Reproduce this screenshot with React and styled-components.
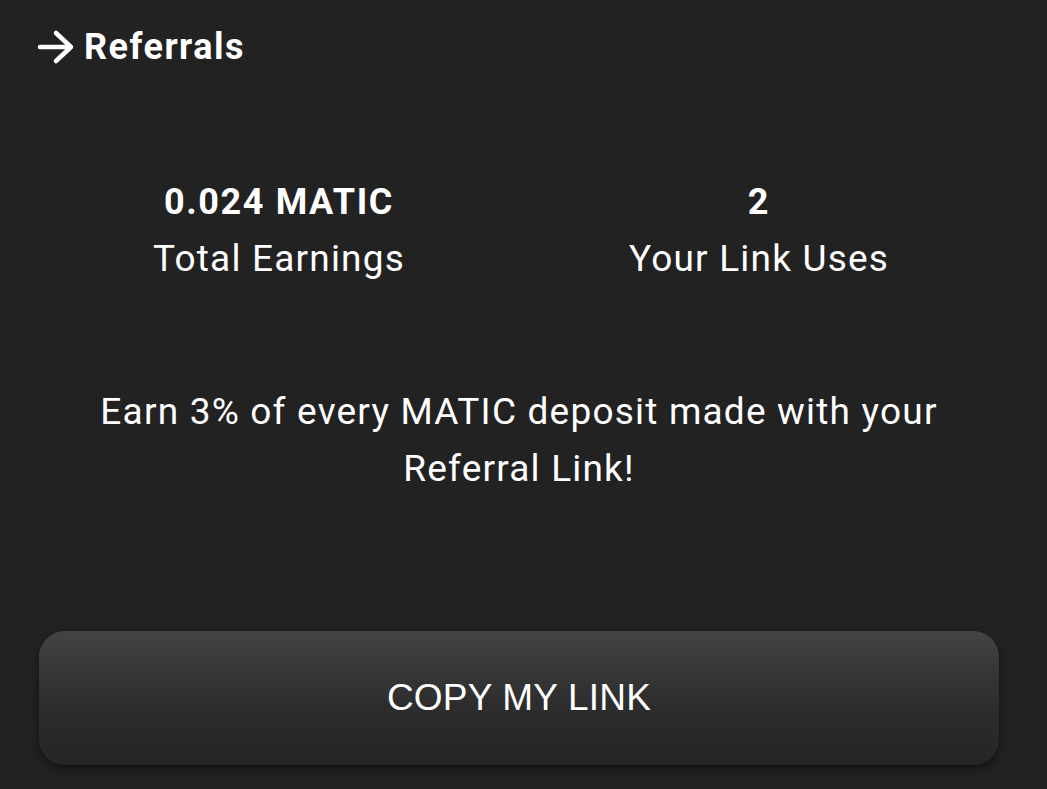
import React from "react";
import styled, { createGlobalStyle } from "styled-components";

const GlobalStyle = createGlobalStyle`
  html, body {
    margin: 0;
    padding: 0;
    background: #222222;
    color: #ffffff;
    font-family: Roboto, "Noto Sans", sans-serif;
  }
`;

const Page = styled.div`
  width: 1047px;
  height: 789px;
  box-sizing: border-box;
  padding: 24px 48px 0 37px;
  display: flex;
  flex-direction: column;
`;

const Title = styled.h1`
  margin: 0;
  display: flex;
  align-items: center;
  gap: 9px;
  font-size: 36px;
  font-weight: 700;
  letter-spacing: 1.5px;
  line-height: 46px;
`;

const Stats = styled.div`
  display: grid;
  grid-template-columns: 1fr 1fr;
  margin-top: 104px;
  padding-left: 2px;
`;

const Stat = styled.div`
  display: flex;
  flex-direction: column;
  align-items: center;
  text-align: center;
`;

const StatValue = styled.div`
  font-size: 36px;
  font-weight: 700;
  letter-spacing: 1.6px;
  line-height: 56px;
`;

const StatLabel = styled.div`
  font-size: 37px;
  font-weight: 400;
  letter-spacing: 1.2px;
  line-height: 58px;
`;

const Blurb = styled.p`
  margin: 95px 20px 0 22px;
  text-align: center;
  font-size: 37px;
  letter-spacing: 1.2px;
  line-height: 57px;
`;

const CopyButton = styled.button`
  margin: 134px 0 0 2px;
  height: 134px;
  border: none;
  border-radius: 26px;
  background: linear-gradient(180deg, #444444 0%, #2d2d2d 55%, #252525 100%);
  box-shadow: 0 4px 10px rgba(0, 0, 0, 0.45);
  color: #ffffff;
  font-family: "Liberation Sans", Arial, sans-serif;
  font-size: 37px;
  letter-spacing: 0.2px;
  cursor: pointer;
`;

const ArrowIcon = () => (
  <svg width="38" height="36" viewBox="0 0 38 36" fill="none">
    <path
      d="M3 18 H34 M19 4 L34 18 L19 32"
      stroke="#ffffff"
      strokeWidth="4.5"
      strokeLinecap="round"
      strokeLinejoin="round"
    />
  </svg>
);

export default function App() {
  return (
    <>
      <GlobalStyle />
      <Page>
        <Title>
          <ArrowIcon />
          Referrals
        </Title>
        <Stats>
          <Stat>
            <StatValue>0.024 MATIC</StatValue>
            <StatLabel>Total Earnings</StatLabel>
          </Stat>
          <Stat>
            <StatValue>2</StatValue>
            <StatLabel>Your Link Uses</StatLabel>
          </Stat>
        </Stats>
        <Blurb>Earn 3% of every MATIC deposit made with your Referral Link!</Blurb>
        <CopyButton>COPY MY LINK</CopyButton>
      </Page>
    </>
  );
}
